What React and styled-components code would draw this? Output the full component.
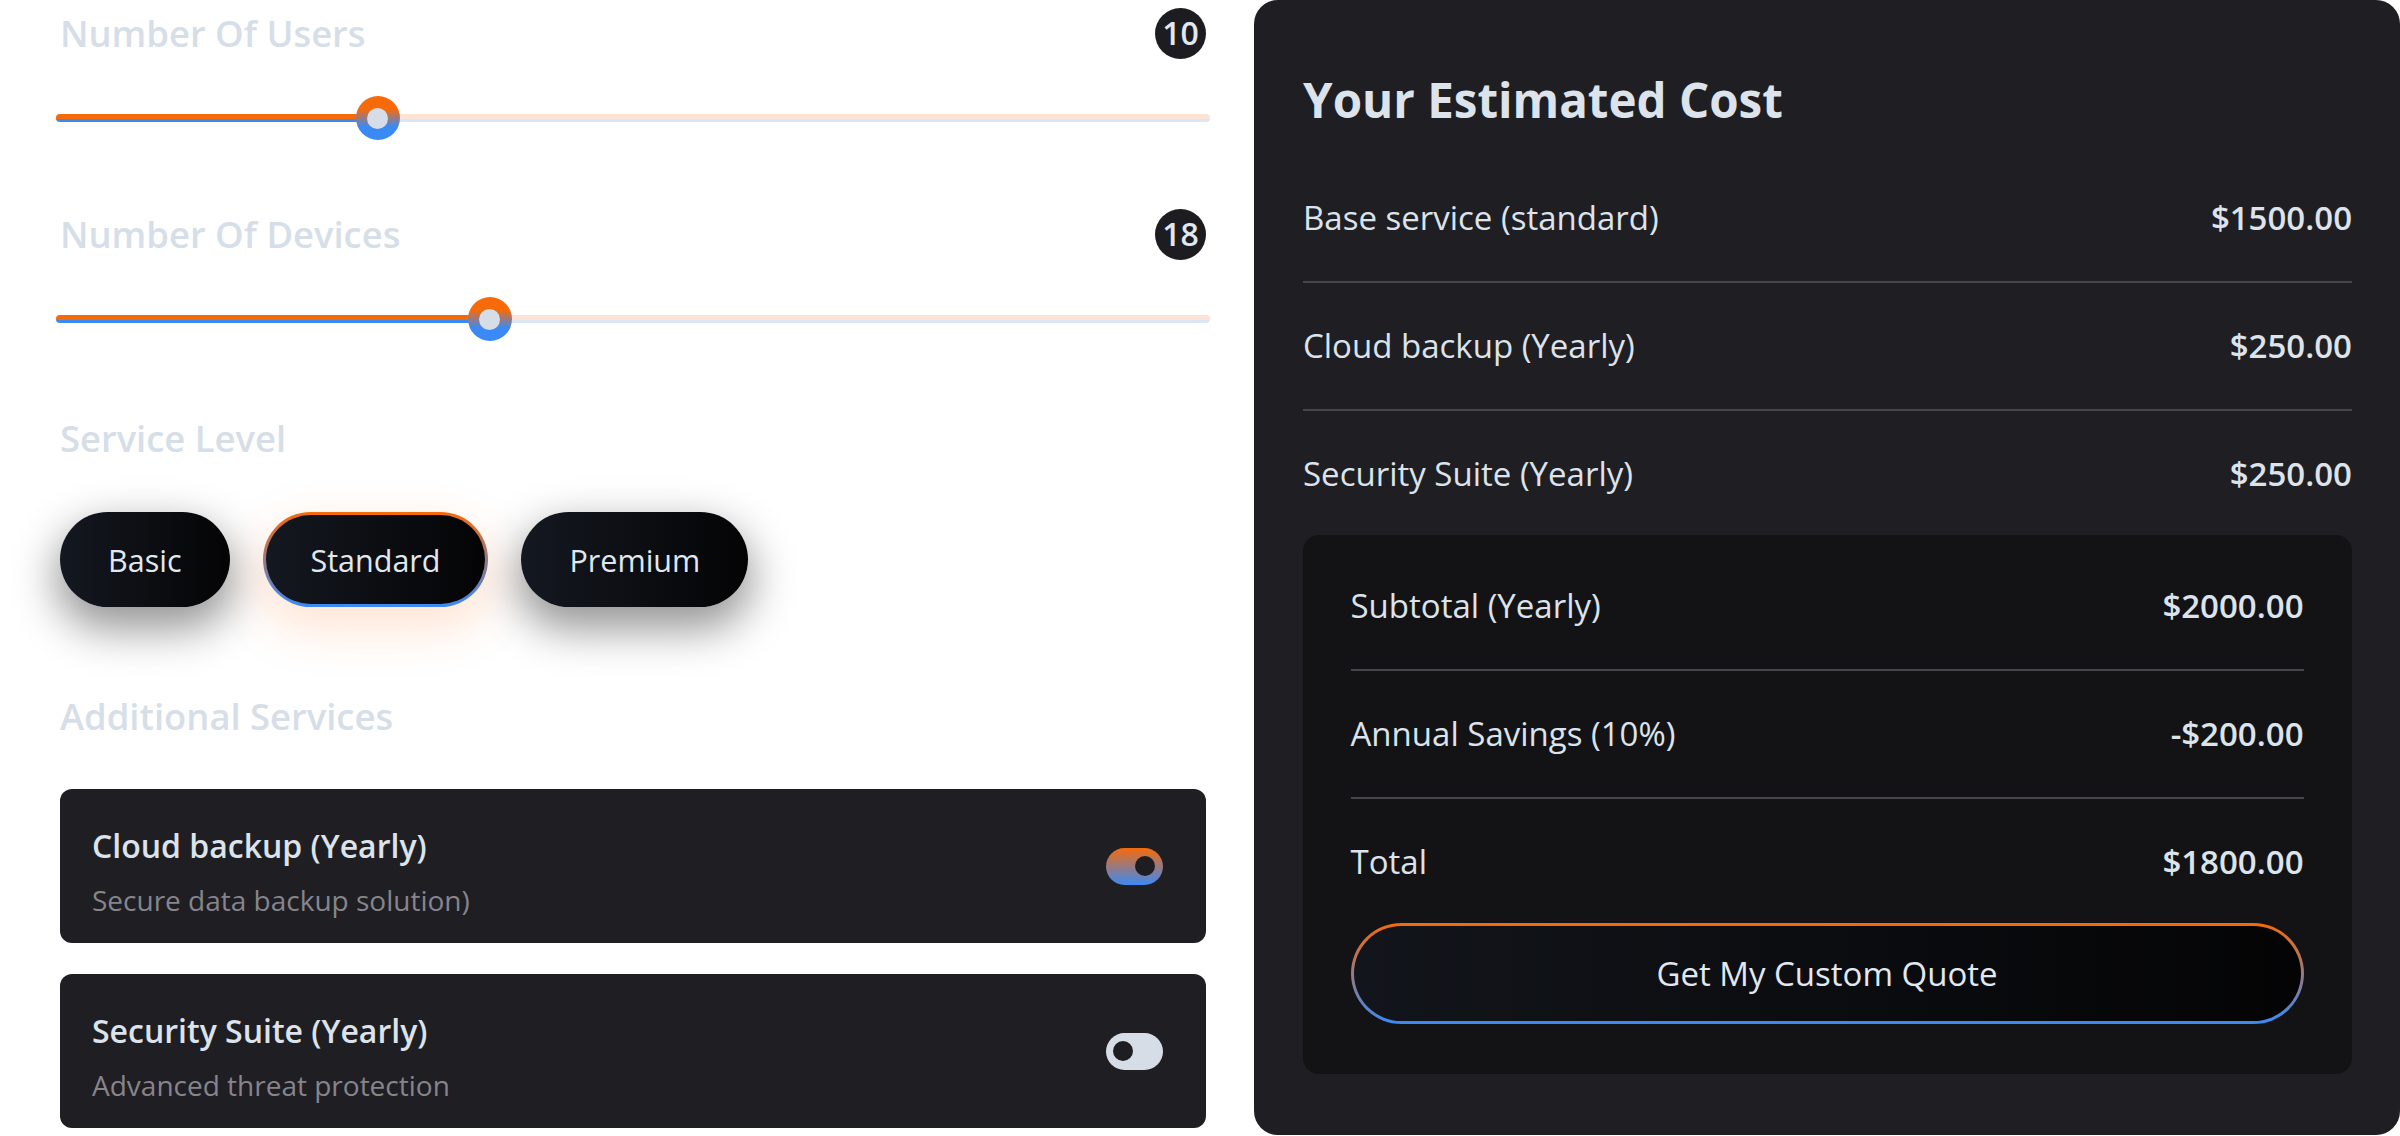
import React from 'react';
import styled, { createGlobalStyle } from 'styled-components';

const colors = {
  orange: '#f66a0a',
  blue: '#3b89f5',
  ink: '#dce3eb',
  label: '#d6dee8',
  panel: '#1f1e23',
  well: '#131316',
  rule: '#47464c',
  muted: '#86858b',
  pale: '#d6dde6',
};

const GlobalStyle = createGlobalStyle`
  html, body {
    margin: 0;
    padding: 0;
    background: #ffffff;
  }
  body {
    font-family: 'Open Sans', 'Noto Sans', sans-serif;
    overflow: hidden;
  }
  *, *::before, *::after {
    box-sizing: border-box;
  }
`;

const Page = styled.div`
  display: grid;
  grid-template-columns: 1146px 1146px;
  column-gap: 48px;
  align-items: start;
  width: 2400px;
  height: 1136px;
  padding-left: 60px;
`;

const Column = styled.div`
  display: flex;
  flex-direction: column;
`;

const FieldHead = styled.div`
  display: flex;
  align-items: center;
  justify-content: space-between;
  height: 66px;
  margin-top: ${p => p.$offset || 0}px;
`;

const Label = styled.h3`
  margin: 0;
  font-size: 36.4px;
  font-weight: 600;
  line-height: 66px;
  color: ${colors.label};
`;

const Badge = styled.span`
  display: grid;
  place-items: center;
  width: 51px;
  height: 51px;
  border-radius: 50%;
  background: #1d1c21;
  color: #e2e8f0;
  font-size: 32px;
  font-weight: 600;
  line-height: 1;
`;

const SliderBox = styled.div`
  position: relative;
  display: flex;
  align-items: center;
  height: 44px;
  margin: 30px -4px 0;
`;

const Track = styled.div`
  width: 100%;
  height: 8px;
  border-radius: 4px;
  overflow: hidden;
  background: linear-gradient(to bottom, #fce3d5 62%, #dbe6f5 62%);
`;

const Fill = styled.div`
  height: 100%;
  background: linear-gradient(to bottom, ${colors.orange} 62%, ${colors.blue} 62%);
`;

const Thumb = styled.span`
  position: absolute;
  top: 0;
  display: grid;
  place-items: center;
  width: 44px;
  height: 44px;
  border-radius: 50%;
  background: linear-gradient(to bottom, ${colors.orange} 30%, ${colors.blue} 70%);
  &::after {
    content: '';
    width: 21px;
    height: 21px;
    border-radius: 50%;
    background: ${colors.pale};
  }
`;

const Levels = styled.div`
  display: flex;
  gap: 33px;
  margin-top: 41px;
`;

const LevelButton = styled.button`
  height: 95px;
  padding: 0 ${p => (p.$active ? 45 : 48)}px;
  border: ${p => (p.$active ? '3px solid transparent' : 'none')};
  border-radius: 999px;
  background: ${p =>
    p.$active
      ? `linear-gradient(90deg, #141820, #040405) padding-box, linear-gradient(180deg, ${colors.orange}, ${colors.blue}) border-box`
      : 'linear-gradient(90deg, #141820, #040405)'};
  box-shadow: ${p =>
    p.$active
      ? '0 18px 48px 4px rgba(255, 120, 40, 0.2)'
      : '0 18px 44px 4px rgba(0, 0, 0, 0.42)'};
  color: #e2e8f0;
  font-family: inherit;
  font-size: 30.5px;
  font-weight: 400;
  cursor: pointer;
`;

const ServiceCard = styled.div`
  display: flex;
  align-items: center;
  justify-content: space-between;
  height: 154px;
  margin-top: ${p => p.$offset}px;
  padding: 37px 43px 24px 32px;
  border-radius: 12px;
  background: ${colors.panel};
`;

const CardText = styled.div`
  display: flex;
  flex-direction: column;
  gap: 15px;
`;

const CardTitle = styled.div`
  font-size: 32px;
  font-weight: 600;
  line-height: 40px;
  color: ${colors.ink};
`;

const CardNote = styled.div`
  font-size: 28px;
  line-height: 38px;
  color: ${colors.muted};
`;

const Switch = styled.span`
  display: flex;
  flex-shrink: 0;
  align-items: center;
  justify-content: ${p => (p.$on ? 'flex-end' : 'flex-start')};
  width: 57px;
  height: 37px;
  margin-bottom: 13px;
  padding: 0 8px 0 7px;
  border-radius: 999px;
  background: ${p =>
    p.$on ? `linear-gradient(to bottom, ${colors.orange}, ${colors.blue})` : colors.pale};
  &::after {
    content: '';
    width: 20px;
    height: 20px;
    border-radius: 50%;
    background: #1e1d22;
  }
`;

const Panel = styled.aside`
  display: flex;
  flex-direction: column;
  height: 1135px;
  padding: 70px 48px 0 49px;
  border-radius: 24px;
  background: ${colors.panel};
`;

const Heading = styled.h2`
  margin: 0 0 24.5px;
  font-size: 47.5px;
  font-weight: 700;
  line-height: 60px;
  color: ${colors.ink};
`;

const CostRow = styled.div`
  display: flex;
  align-items: center;
  justify-content: space-between;
  padding: 39px 0;
  border-bottom: 2px solid ${colors.rule};
  font-size: 33px;
  line-height: 48px;
  color: ${colors.ink};
  &:last-of-type {
    border-bottom: none;
    padding-bottom: ${p => p.$tail || 39}px;
  }
`;

const Amount = styled.span`
  font-weight: 600;
`;

const Summary = styled.div`
  display: flex;
  flex-direction: column;
  padding: 8.5px 48.5px 49.5px 47.5px;
  border-radius: 16px;
  background: ${colors.well};
`;

const QuoteButton = styled.button`
  width: 100%;
  height: 101px;
  margin-top: -2px;
  border: 3px solid transparent;
  border-radius: 999px;
  background: linear-gradient(90deg, #12151b, #040405) padding-box,
    linear-gradient(180deg, ${colors.orange}, ${colors.blue}) border-box;
  color: #e2e8f0;
  font-family: inherit;
  font-size: 33px;
  font-weight: 500;
  cursor: pointer;
`;

const sliders = [
  { label: 'Number Of Users', value: 10, pct: 27.9, offset: 0 },
  { label: 'Number Of Devices', value: 18, pct: 37.6, offset: 61 },
];

const levels = ['Basic', 'Standard', 'Premium'];

const services = [
  { title: 'Cloud backup (Yearly)', note: 'Secure data backup solution)', on: true, offset: 40 },
  { title: 'Security Suite (Yearly)', note: 'Advanced threat protection', on: false, offset: 31 },
];

const lines = [
  { label: 'Base service (standard)', amount: '$1500.00' },
  { label: 'Cloud backup (Yearly)', amount: '$250.00' },
  { label: 'Security Suite (Yearly)', amount: '$250.00' },
];

const totals = [
  { label: 'Subtotal (Yearly)', amount: '$2000.00' },
  { label: 'Annual Savings (10%)', amount: '-$200.00' },
  { label: 'Total', amount: '$1800.00' },
];

const App = () => (
  <>
    <GlobalStyle />
    <Page>
      <Column>
        {sliders.map(s => (
          <React.Fragment key={s.label}>
            <FieldHead $offset={s.offset}>
              <Label>{s.label}</Label>
              <Badge>{s.value}</Badge>
            </FieldHead>
            <SliderBox>
              <Track>
                <Fill style={{ width: `${s.pct}%` }} />
              </Track>
              <Thumb style={{ left: `calc(${s.pct}% - 22px)` }} />
            </SliderBox>
          </React.Fragment>
        ))}

        <FieldHead $offset={64}>
          <Label>Service Level</Label>
        </FieldHead>
        <Levels>
          {levels.map(l => (
            <LevelButton key={l} $active={l === 'Standard'}>
              {l}
            </LevelButton>
          ))}
        </Levels>

        <FieldHead $offset={76}>
          <Label>Additional Services</Label>
        </FieldHead>
        {services.map(s => (
          <ServiceCard key={s.title} $offset={s.offset}>
            <CardText>
              <CardTitle>{s.title}</CardTitle>
              <CardNote>{s.note}</CardNote>
            </CardText>
            <Switch $on={s.on} />
          </ServiceCard>
        ))}
      </Column>

      <Panel>
        <Heading>Your Estimated Cost</Heading>
        <div>
          {lines.map(l => (
            <CostRow key={l.label} $tail={37}>
              <span>{l.label}</span>
              <Amount>{l.amount}</Amount>
            </CostRow>
          ))}
        </div>
        <Summary>
          <div>
            {totals.map(t => (
              <CostRow key={t.label}>
                <span>{t.label}</span>
                <Amount>{t.amount}</Amount>
              </CostRow>
            ))}
          </div>
          <QuoteButton>Get My Custom Quote</QuoteButton>
        </Summary>
      </Panel>
    </Page>
  </>
);

export default App;
